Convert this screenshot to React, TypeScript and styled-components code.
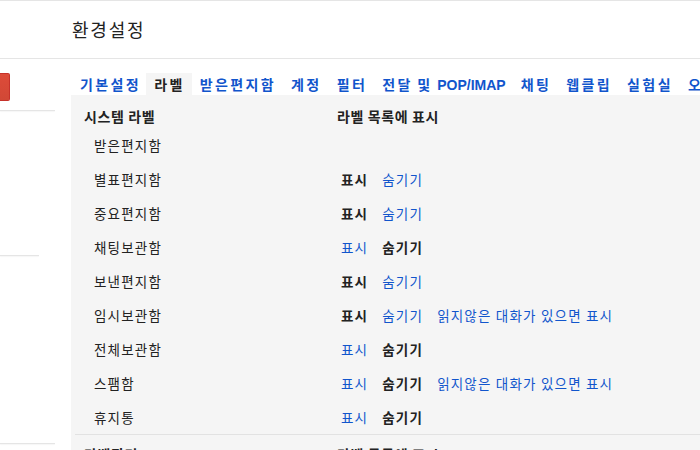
import React from 'react'
import styled, { createGlobalStyle } from 'styled-components'

const GlobalStyle = createGlobalStyle`
  html, body {
    margin: 0;
    padding: 0;
    background: #fff;
    font-family: "Noto Sans CJK KR", "Noto Sans", "Liberation Sans", sans-serif;
    color: #222;
    overflow: hidden;
  }
`

interface LabelRow {
  name: string
  shown?: boolean
  unread?: boolean
}

const rows: LabelRow[] = [
  { name: '받은편지함' },
  { name: '별표편지함', shown: true },
  { name: '중요편지함', shown: true },
  { name: '채팅보관함', shown: false },
  { name: '보낸편지함', shown: true },
  { name: '임시보관함', shown: true, unread: true },
  { name: '전체보관함', shown: false },
  { name: '스팸함', shown: false, unread: true },
  { name: '휴지통', shown: false },
]

interface TabItem {
  label: string
  latin?: string
}

const tabs: TabItem[] = [
  { label: '기본설정' },
  { label: '라벨' },
  { label: '받은편지함' },
  { label: '계정' },
  { label: '필터' },
  { label: '전달 및 ', latin: 'POP/IMAP' },
  { label: '채팅' },
  { label: '웹클립' },
  { label: '실험실' },
  { label: '오프라인' },
]

const App = () => {
  return (
    <Page>
      <GlobalStyle />
      <Header>
        <Title>환경설정</Title>
      </Header>
      <Body>
        <Sidebar>
          <ComposeButton />
          <SideRule $top={9} $width={55} />
          <SideRule $top={144} $width={39} />
          <SideRule $top={187} $width={55} />
        </Sidebar>
        <Main>
          <Tabs>
            {tabs.map((t, i) => (
              <Tab key={t.label} $active={i === 1}>
                {t.label}
                {t.latin && <Latin>{t.latin}</Latin>}
              </Tab>
            ))}
          </Tabs>
          <Panel>
            <HeadRow>
              <HeadCell>시스템 라벨</HeadCell>
              <HeadCell $second>라벨 목록에 표시</HeadCell>
            </HeadRow>
            <Table>
              {rows.map((r) => (
                <Row key={r.name}>
                  <NameCell>{r.name}</NameCell>
                  <ActionCell>
                    {r.shown !== undefined && (
                      <>
                        <Action $current={r.shown}>표시</Action>
                        <Action $current={!r.shown}>숨기기</Action>
                        {r.unread && <Action $current={false}>읽지않은 대화가 있으면 표시</Action>}
                      </>
                    )}
                  </ActionCell>
                </Row>
              ))}
            </Table>
            <Divider />
            <HeadRow $lower>
              <HeadCell>라벨관리</HeadCell>
              <HeadCell $second>라벨 목록에 표시</HeadCell>
            </HeadRow>
          </Panel>
        </Main>
      </Body>
    </Page>
  )
}

const Page = styled.div`
  width: 700px;
  height: 450px;
  overflow: hidden;
  border-top: 1px solid #e5e5e5;
  box-sizing: border-box;
`

const Header = styled.div`
  height: 57px;
  border-bottom: 1px solid #e5e5e5;
  display: flex;
  align-items: center;
  padding-left: 72px;
`

const Title = styled.div`
  font-size: 18px;
  letter-spacing: 1.8px;
  color: #222;
  margin-top: -2px;
`

const Body = styled.div`
  display: flex;
`

const Sidebar = styled.div`
  width: 71px;
  flex-shrink: 0;
  padding-top: 14px;
`

const ComposeButton = styled.div`
  width: 10px;
  height: 28px;
  background: linear-gradient(#dd4b39, #d14836);
  border: 1px solid #c6322a;
  border-left: none;
  border-radius: 0 2px 2px 0;
  box-sizing: border-box;
`

const SideRule = styled.div<{ $top: number; $width: number }>`
  width: ${(p) => p.$width}px;
  height: 1px;
  background: #e5e5e5;
  margin-top: ${(p) => p.$top}px;
  box-shadow: 0 1px 1px rgba(0, 0, 0, 0.04);
`

const Main = styled.div`
  flex: 1;
  padding-top: 14px;
  min-width: 0;
`

const Tabs = styled.div`
  display: flex;
  height: 22px;
  white-space: nowrap;
`

const Tab = styled.div<{ $active: boolean }>`
  font-size: 14px;
  font-weight: bold;
  letter-spacing: 2.4px;
  word-spacing: -1px;
  line-height: 22px;
  padding: 0 7px 0 8px;
  color: ${(p) => (p.$active ? '#222' : '#15c')};
  background: ${(p) => (p.$active ? '#f5f5f5' : 'transparent')};
  &:first-child {
    padding-left: 9px;
    padding-right: 5px;
  }
`

const Latin = styled.span`
  font-family: "Liberation Sans", Arial, sans-serif;
  letter-spacing: 0;
`

const Panel = styled.div`
  background: #f5f5f5;
  padding-top: 10px;
  height: 400px;
`

const Table = styled.div`
  display: flex;
  flex-direction: column;
  padding-top: 1px;
`

const HeadRow = styled.div<{ $lower?: boolean }>`
  display: flex;
  height: 22px;
  align-items: center;
  margin-top: ${(p) => (p.$lower ? '8px' : '0')};
`

const HeadCell = styled.div<{ $second?: boolean }>`
  font-size: 14px;
  font-weight: bold;
  letter-spacing: 0.6px;
  color: #222;
  width: ${(p) => (p.$second ? 'auto' : '253px')};
  padding-left: ${(p) => (p.$second ? '0' : '13px')};
  white-space: nowrap;
`

const Row = styled.div`
  display: flex;
  height: 34px;
  align-items: center;
`

const NameCell = styled.div`
  width: 247px;
  padding-left: 23px;
  font-size: 13.5px;
  letter-spacing: 1.2px;
  color: #222;
`

const ActionCell = styled.div`
  display: flex;
  gap: 14px;
  font-size: 13.5px;
  letter-spacing: 1.2px;
  white-space: nowrap;
`

const Action = styled.span<{ $current: boolean }>`
  color: ${(p) => (p.$current ? '#222' : '#15c')};
  font-weight: ${(p) => (p.$current ? 'bold' : 'normal')};
`

const Divider = styled.div`
  height: 1px;
  background: #e2e2e2;
  margin-left: 4px;
`

export default App
